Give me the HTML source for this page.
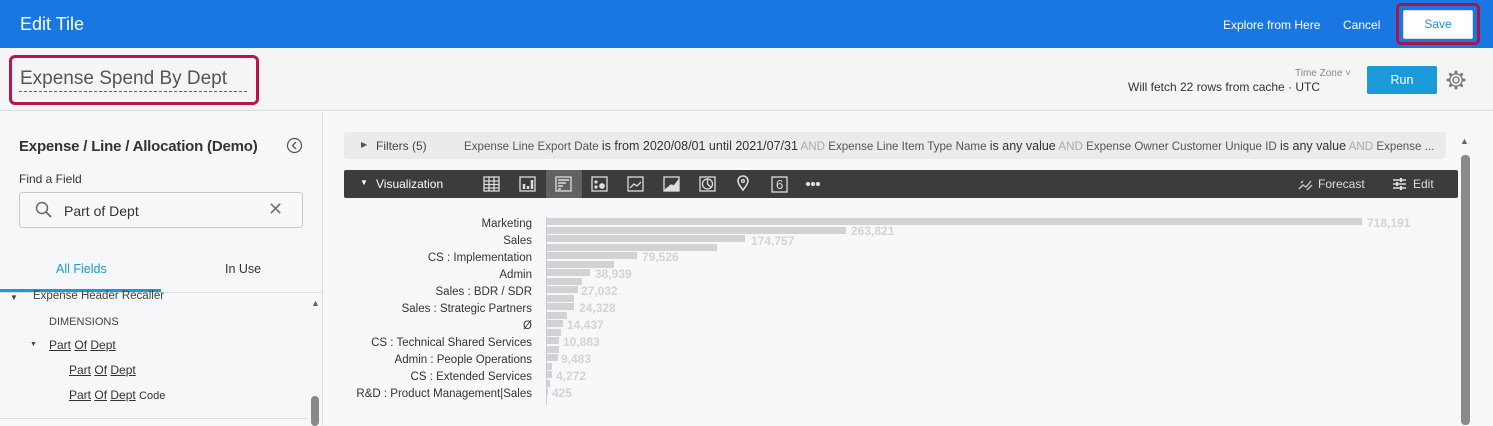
<!DOCTYPE html>
<html><head><meta charset="utf-8"><style>
*{box-sizing:border-box;margin:0;padding:0}
body{width:1493px;height:425px;overflow:hidden;font-family:"Liberation Sans",sans-serif;background:#f7f8fa;position:relative;color:#333}
.abs{position:absolute}
#top{left:0;top:0;width:1493px;height:48px;background:#1877e0}
#bar2{left:0;top:48px;width:1493px;height:63px;background:#f5f5f5;border-bottom:1px solid #dcdcdc}
#left{left:0;top:112px;width:323px;height:313px;background:#f6f7f8;border-right:1px solid #dcdcdc}
.t{position:absolute;white-space:nowrap}
.bar{position:absolute;left:547px;height:7px;background:#d0d2d3}
.val{position:absolute;font-size:12px;color:#d3d3d3;font-weight:bold;white-space:nowrap}
.lbl{position:absolute;right:961px;font-size:11.5px;color:#333;white-space:nowrap;text-align:right}
u{text-decoration:underline}
</style></head><body>
<div id="top" class="abs"></div>
<div class="t" style="left:20px;top:14px;font-size:18px;color:#fff">Edit Tile</div>
<div class="t" style="left:1223px;top:18px;font-size:12px;color:#fff">Explore from Here</div>
<div class="t" style="left:1343px;top:18px;font-size:12px;color:#fff">Cancel</div>
<div class="abs" style="left:1396px;top:3px;width:84px;height:42px;border:3px solid #a3184a;border-radius:5px"></div>
<div class="abs" style="left:1403px;top:10px;width:70px;height:29px;background:#fff;border:1px solid #ddd;border-radius:2px;color:#1a8de0;font-size:12px;text-align:center;line-height:27px">Save</div>

<div id="bar2" class="abs"></div>
<div class="abs" style="left:9px;top:55px;width:250px;height:50px;border:3px solid #b8144a;border-radius:6px"></div>
<div class="t" style="left:20px;top:68px;font-size:19px;color:#555">Expense Spend By Dept</div>
<div class="abs" style="left:19px;top:91px;width:228px;border-top:1px dashed #2a6fb5"></div>
<div class="t" style="left:1295px;top:68px;font-size:10px;color:#888">Time Zone ˅</div>
<div class="t" style="left:1128px;top:80px;font-size:12px;color:#333">Will fetch 22 rows from cache · UTC</div>
<div class="abs" style="left:1367px;top:66px;width:70px;height:28px;background:#1a9ad9;border-radius:2px;color:#fff;font-size:12.5px;text-align:center;line-height:28px">Run</div>
<svg class="abs" style="left:1445px;top:69px" width="22" height="22" viewBox="0 0 20 20"><circle cx="10" cy="10" r="2.8" fill="none" stroke="#777" stroke-width="1.2"/><path d="M10 1.5v3M10 15.5v3M1.5 10h3M15.5 10h3M4 4l2.1 2.1M13.9 13.9L16 16M4 16l2.1-2.1M13.9 6.1L16 4" stroke="#777" stroke-width="2.4"/><circle cx="10" cy="10" r="5.6" fill="none" stroke="#777" stroke-width="1.2"/></svg>

<div id="left" class="abs"></div>
<div class="t" style="left:19px;top:138px;font-size:15px;font-weight:bold;color:#333;letter-spacing:-0.2px">Expense / Line / Allocation (Demo)</div>
<svg class="abs" style="left:286px;top:137px" width="17" height="17"><circle cx="8.5" cy="8.5" r="7" fill="none" stroke="#555" stroke-width="1.2"/><path d="M10 5l-3.5 3.5L10 12" fill="none" stroke="#555" stroke-width="1.3"/></svg>
<div class="t" style="left:19px;top:172px;font-size:12px;color:#333">Find a Field</div>
<div class="abs" style="left:19px;top:192px;width:284px;height:36px;border:1px solid #c8c8c8;border-radius:3px;background:#f8f8f8"></div>
<svg class="abs" style="left:35px;top:201px" width="18" height="18"><circle cx="7" cy="7" r="5.5" fill="none" stroke="#666" stroke-width="1.5"/><path d="M11 11l5 5" stroke="#666" stroke-width="1.8"/></svg>
<div class="t" style="left:64px;top:203px;font-size:14px;color:#333">Part of Dept</div>
<div class="t" style="left:268px;top:199px;font-size:18px;color:#777">✕</div>
<div class="t" style="left:56px;top:262px;font-size:12.5px;color:#1a9ad9">All Fields</div>
<div class="t" style="left:225px;top:262px;font-size:12.5px;color:#333">In Use</div>
<div class="abs" style="left:0;top:289px;width:161px;height:3px;background:#1a9ad9"></div>
<div class="abs" style="left:0;top:292px;width:323px;border-top:1px solid #ddd"></div>
<div class="t" style="left:10px;top:293px;font-size:8px;color:#444">▼</div>
<div class="t" style="left:33px;top:290px;font-size:11.5px;color:#444">Expense Header Recaller</div>
<div class="t" style="left:49px;top:316px;font-size:11px;color:#444">DIMENSIONS</div>
<div class="t" style="left:30px;top:341px;font-size:7px;color:#444">▼</div>
<div class="t" style="left:49px;top:338px;font-size:12px;color:#333"><u>Part</u> <u>Of</u> <u>Dept</u></div>
<div class="t" style="left:69px;top:363px;font-size:12px;color:#333"><u>Part</u> <u>Of</u> <u>Dept</u></div>
<div class="t" style="left:69px;top:388px;font-size:12px;color:#333"><u>Part</u> <u>Of</u> <u>Dept</u> <span style="font-size:11px">Code</span></div>
<div class="abs" style="left:0;top:418px;width:308px;border-top:1px solid #ddd"></div>
<div class="t" style="left:311px;top:298px;font-size:9px;color:#666">▲</div>
<div class="abs" style="left:311px;top:396px;width:8px;height:30px;background:#888;border-radius:4px"></div>

<!-- filters -->
<div class="abs" style="left:344px;top:132px;width:1102px;height:27px;background:#ebebeb;border-radius:3px"></div>
<div class="t" style="left:361px;top:140px;font-size:8px;color:#555">▶</div>
<div class="t" style="left:376px;top:139px;font-size:12px;color:#444">Filters (5)</div>
<div class="t" style="left:464px;top:139px;font-size:11.6px;color:#555;width:980px;overflow:hidden">Expense Line Export Date <span style="font-size:12.5px;color:#333">is from 2020/08/01 until 2021/07/31</span> <span style="color:#aaa">AND</span> Expense Line Item Type Name <span style="font-size:12.5px;color:#333">is any value</span> <span style="color:#aaa">AND</span> Expense Owner Customer Unique ID <span style="font-size:12.5px;color:#333">is any value</span> <span style="color:#aaa">AND</span> Expense ...</div>
<div class="t" style="left:1460px;top:136px;font-size:9px;color:#666">▲</div>
<div class="abs" style="left:1461px;top:155px;width:9px;height:270px;background:#8a8a8a;border-radius:4px"></div>

<!-- viz bar -->
<div class="abs" style="left:344px;top:170px;width:1114px;height:28px;background:#3b3c3d;border-radius:2px"></div>
<div class="t" style="left:360px;top:178px;font-size:8px;color:#fff">▼</div>
<div class="t" style="left:376px;top:177px;font-size:12px;color:#fff">Visualization</div>
<div class="abs" style="left:546px;top:170px;width:36px;height:28px;background:#616263"></div>
<svg class="abs" style="left:480px;top:174px" width="350" height="20" fill="none" stroke="#ddd" stroke-width="1.3">
<rect x="4" y="3" width="15" height="14"/><path d="M4 7h15M4 10.5h15M4 14h15M9 3v14M14 3v14"/>
<rect x="40" y="3" width="15" height="14"/><path d="M44 15v-5M48 15v-3M52 15v-9" stroke-width="2.5"/>
<rect x="76" y="3" width="15" height="14"/><path d="M78 6h11M78 9h8M78 12h5M78 15h3" stroke-width="1.5"/>
<rect x="112" y="3" width="15" height="14"/><circle cx="116" cy="8" r="1" fill="#ddd"/><circle cx="116" cy="13" r="1" fill="#ddd"/><circle cx="122" cy="12" r="2.2" fill="#ddd"/>
<rect x="148" y="3" width="15" height="14"/><path d="M150 14l4-4 3 2 4-4"/>
<rect x="184" y="3" width="15" height="14"/><path d="M185 16l6-5 3 1 4-5v9z" fill="#ddd"/>
<rect x="220" y="3" width="15" height="14"/><circle cx="227.5" cy="10" r="5"/><path d="M227.5 5v5l3.5 3.5"/>
<path d="M263 16c-4-5-5-7-5-9a5 5 0 0 1 10 0c0 2-1 4-5 9z" stroke-width="1.6"/><circle cx="263" cy="7" r="1.4"/>
<rect x="292" y="3" width="15" height="15"/>
<circle cx="328" cy="10" r="1.5" fill="#ddd"/><circle cx="333" cy="10" r="1.5" fill="#ddd"/><circle cx="338" cy="10" r="1.5" fill="#ddd"/>
</svg>
<div class="t" style="left:776px;top:177px;font-size:13px;color:#ddd">6</div>
<svg class="abs" style="left:1298px;top:177px" width="16" height="14" fill="none" stroke="#ccc" stroke-width="1.3"><path d="M1 12l4-4 3 2 5-6M3 6l2-2M9 13l5-5"/></svg>
<div class="t" style="left:1318px;top:177px;font-size:12px;color:#ddd">Forecast</div>
<svg class="abs" style="left:1392px;top:177px" width="15" height="14" stroke="#ddd" stroke-width="1.5"><path d="M1 3h13M1 7h13M1 11h13"/><path d="M9 1v4M5 5v4M9 9v4" stroke-width="2"/></svg>
<div class="t" style="left:1413px;top:177px;font-size:12px;color:#ddd">Edit</div>

<!-- chart -->
<div class="abs" style="left:546px;top:217px;width:1px;height:188px;background:#c6cdd6"></div>
<div class="bar" style="top:218px;width:815px"></div>
<div class="bar" style="top:226.5px;width:299px"></div>
<div class="bar" style="top:235px;width:198px"></div>
<div class="bar" style="top:243.5px;width:170px"></div>
<div class="bar" style="top:252px;width:90px"></div>
<div class="bar" style="top:260.5px;width:67px"></div>
<div class="bar" style="top:269px;width:43px"></div>
<div class="bar" style="top:277.5px;width:35px"></div>
<div class="bar" style="top:286px;width:31px"></div>
<div class="bar" style="top:294.5px;width:27px"></div>
<div class="bar" style="top:303px;width:27px"></div>
<div class="bar" style="top:311.5px;width:20px"></div>
<div class="bar" style="top:320px;width:16px"></div>
<div class="bar" style="top:328.5px;width:14px"></div>
<div class="bar" style="top:337px;width:12px"></div>
<div class="bar" style="top:345.5px;width:12px"></div>
<div class="bar" style="top:354px;width:11px"></div>
<div class="bar" style="top:362.5px;width:5px"></div>
<div class="bar" style="top:371px;width:5px"></div>
<div class="bar" style="top:379.5px;width:3px"></div>
<div class="bar" style="top:388px;width:1px"></div>
<div class="val" style="left:1367px;top:216px">718,191</div>
<div class="val" style="left:851px;top:224px">263,821</div>
<div class="val" style="left:751px;top:234px">174,757</div>
<div class="val" style="left:642px;top:250px">79,526</div>
<div class="val" style="left:595px;top:267px">38,939</div>
<div class="val" style="left:581px;top:284px">27,032</div>
<div class="val" style="left:579px;top:301px">24,328</div>
<div class="val" style="left:567px;top:318px">14,437</div>
<div class="val" style="left:563px;top:335px">10,883</div>
<div class="val" style="left:561px;top:352px">9,483</div>
<div class="val" style="left:556px;top:369px">4,272</div>
<div class="val" style="left:552px;top:386px">425</div>
<div class="lbl" style="top:218px">Marketing</div>
<div class="lbl" style="top:235px">Sales</div>
<div class="lbl" style="top:252px">CS : Implementation</div>
<div class="lbl" style="top:269px">Admin</div>
<div class="lbl" style="top:286px">Sales : BDR / SDR</div>
<div class="lbl" style="top:303px">Sales : Strategic Partners</div>
<div class="lbl" style="top:320px">Ø</div>
<div class="lbl" style="top:337px">CS : Technical Shared Services</div>
<div class="lbl" style="top:354px">Admin : People Operations</div>
<div class="lbl" style="top:371px">CS : Extended Services</div>
<div class="lbl" style="top:388px">R&amp;D : Product Management|Sales</div>
</body></html>
